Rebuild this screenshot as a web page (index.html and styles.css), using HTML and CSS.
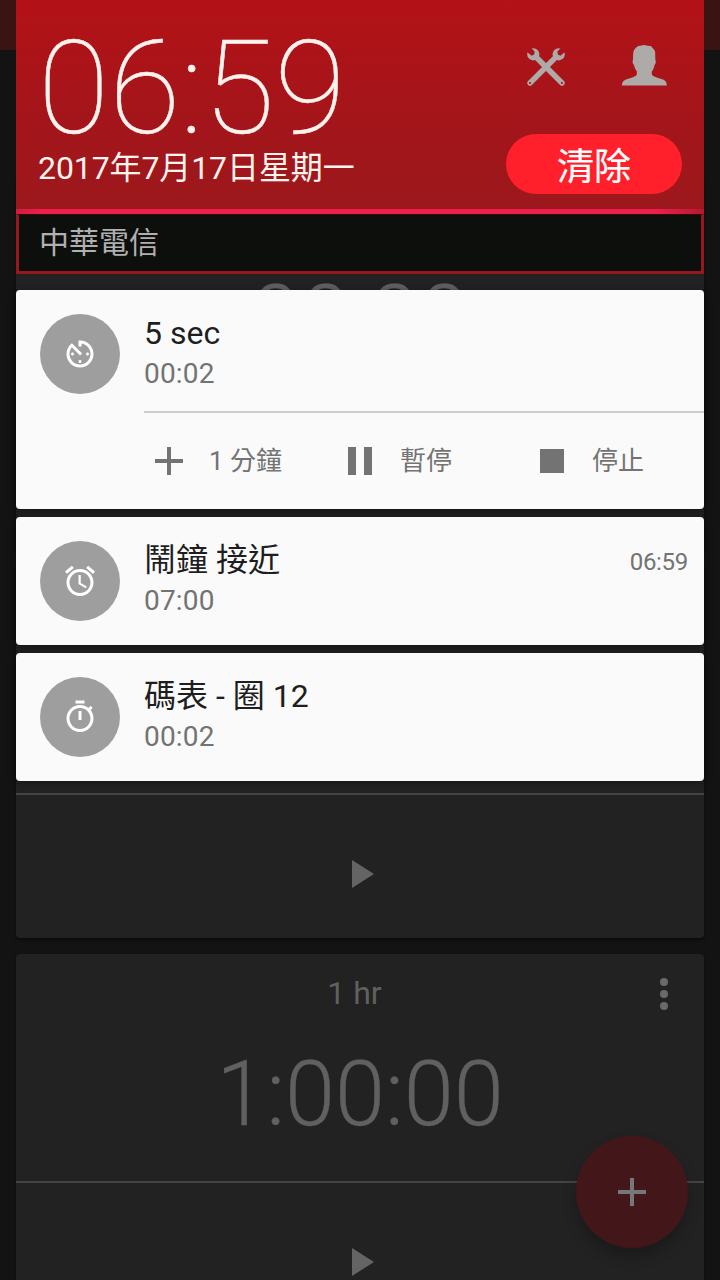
FILE: index.html
```html
<!DOCTYPE html>
<html lang="zh-Hant">
<head>
<meta charset="utf-8">
<title>時鐘</title>
<link rel="stylesheet" href="styles.css">
</head>
<body>
<div class="screen">
  <main class="app">
    <div class="app-bar"></div>
    <section class="timer timer-first">
      <div class="timer-name"></div>
      <div class="timer-value">00:00</div>
      <div class="timer-actions"></div>
    </section>
    <section class="timer">
      <div class="timer-name"></div>
      <div class="timer-value"></div>
      <div class="timer-actions">
        <svg class="play" viewBox="0 0 22 28"><path d="M0 0L22 14L0 28z"/></svg>
      </div>
    </section>
    <section class="timer">
      <div class="timer-name"><span>1 hr</span>
        <svg class="more" viewBox="0 0 8 32"><circle cx="4" cy="4" r="4"/><circle cx="4" cy="16" r="4"/><circle cx="4" cy="28" r="4"/></svg>
      </div>
      <div class="timer-value">1:00:00</div>
      <div class="timer-actions">
        <svg class="play" viewBox="0 0 22 28"><path d="M0 0L22 14L0 28z"/></svg>
      </div>
    </section>
    <div class="fab"><svg class="fab-plus" viewBox="0 0 28 28"><path d="M12 0h4v12h12v4H16v12h-4V16H0v-4h12z"/></svg></div>
  </main>

  <div class="shade">
    <header class="header">
      <div class="header-left">
        <div class="clock">06:59</div>
        <div class="date">2017年7月17日星期一</div>
      </div>
      <div class="header-right">
        <div class="header-icons">
          <svg class="tools" viewBox="0 0 38 38">
            <defs>
              <mask id="holes" maskUnits="userSpaceOnUse" x="-4" y="-4" width="46" height="46">
                <rect x="-4" y="-4" width="46" height="46" fill="#fff"/>
                <circle cx="35" cy="35" r="1.1" fill="#000"/>
                <path d="M-2 2.2L2.2 -2L7.6 3.6L7.2 6.6L4.6 7.8z" fill="#000"/>
              </mask>
              <g id="wrench" mask="url(#holes)">
                <path d="M6 6L35 35" stroke="#adaaa7" stroke-width="5.4" stroke-linecap="round"/>
                <circle cx="6.3" cy="6.3" r="6.1" fill="#adaaa7"/>
              </g>
            </defs>
            <use href="#wrench"/>
            <use href="#wrench" transform="matrix(-1 0 0 1 38 0)"/>
          </svg>
          <svg class="user" viewBox="0 0 45 41"><path d="M0 40.6C.2 37 1.2 35.6 4 34.5C8 33 13.5 32.2 14.8 29.5L14.9 26.4C13.4 24.8 12.6 22.6 12 20C10.6 19 10.2 16.4 11 14.5L11.2 8C12 3.4 15 .6 19.5 .4L22 0L27 1L29 .9L30.5 3C32.6 4.2 33.5 7 33.2 9.5L33.3 14.5C34.2 16.5 33.8 19 32.5 20C32 22.6 31.2 25 29.8 26.4L29.9 29.5C31.5 32.2 37 33 41 34.5C43.6 35.6 44.6 37 44.8 40.6z"/></svg>
        </div>
        <div class="clear">清除</div>
      </div>
    </header>
    <div class="glow"></div>
    <div class="carrier">中華電信</div>

    <div class="notes">
      <article class="note">
        <div class="note-top">
          <div class="badge"><svg viewBox="0 0 24 24"><path d="M11 17c0 .55.45 1 1 1s1-.45 1-1-.45-1-1-1-1 .45-1 1zm0-14v4h2V5.08c3.39.49 6 3.39 6 6.92 0 3.87-3.13 7-7 7s-7-3.13-7-7c0-1.68.59-3.22 1.58-4.42L12 13l1.41-1.41-6.8-6.8v.02C4.42 6.45 3 9.05 3 12c0 4.97 4.02 9 9 9 4.97 0 9-4.03 9-9s-4.03-9-9-9h-1zm7 9c0-.55-.45-1-1-1s-1 .45-1 1 .45 1 1 1 1-.45 1-1zM6 12c0 .55.45 1 1 1s1-.45 1-1-.45-1-1-1-1 .45-1 1z"/></svg></div>
          <div class="note-text"><div class="note-title">5 sec</div><div class="note-sub">00:02</div></div>
        </div>
        <div class="note-actions">
          <div class="action"><span class="action-icon action-icon-wide"><svg class="ico-plus" viewBox="0 0 28 28"><path d="M12 0h4v12h12v4H16v12h-4V16H0v-4h12z"/></svg></span>1 分鐘</div>
          <div class="action"><span class="action-icon"><svg class="ico-pause" viewBox="0 0 24 28"><path d="M0 0h8v28H0zM16 0h8v28h-8z"/></svg></span>暫停</div>
          <div class="action"><span class="action-icon"><svg class="ico-stop" viewBox="0 0 24 24"><path d="M0 0h24v24H0z"/></svg></span>停止</div>
        </div>
      </article>
      <article class="note">
        <div class="note-top">
          <div class="badge"><svg viewBox="0 0 24 24"><path d="M22 5.72l-4.6-3.86-1.29 1.53 4.6 3.86L22 5.72zM7.88 3.39L6.6 1.86 2 5.71l1.29 1.53 4.59-3.85zM12.5 8H11v6l4.75 2.85.75-1.23-4-2.37V8zM12 4c-4.97 0-9 4.03-9 9s4.02 9 9 9c4.97 0 9-4.03 9-9s-4.03-9-9-9zm0 16c-3.87 0-7-3.13-7-7s3.13-7 7-7 7 3.13 7 7-3.13 7-7 7z"/></svg></div>
          <div class="note-text"><div class="note-title">鬧鐘 接近</div><div class="note-sub">07:00</div></div>
          <div class="note-time">06:59</div>
        </div>
      </article>
      <article class="note">
        <div class="note-top">
          <div class="badge"><svg viewBox="0 0 24 24"><path d="M15 1H9v2h6V1zm-4 13h2V8h-2v6zm8.03-6.61l1.42-1.42c-.43-.51-.9-.99-1.41-1.41l-1.42 1.42C16.07 4.74 14.12 4 12 4c-4.97 0-9 4.03-9 9s4.02 9 9 9 9-4.03 9-9c0-2.12-.74-4.07-1.97-5.61zM12 20c-3.87 0-7-3.13-7-7s3.13-7 7-7 7 3.13 7 7-3.13 7-7 7z"/></svg></div>
          <div class="note-text"><div class="note-title">碼表 - 圈 12</div><div class="note-sub">00:02</div></div>
        </div>
      </article>
    </div>
  </div>
</div>
</body>
</html>
```
FILE: styles.css
```css
* { box-sizing: border-box; }

body {
  margin: 0;
  background: #131313;
  font-family: Roboto, "Noto Sans CJK TC", sans-serif;
}

svg { display: block; overflow: visible; }

.screen {
  position: relative;
  width: 720px;
  height: 1280px;
  overflow: hidden;
}

/* Dimmed clock app */
.app {
  display: flex;
  flex-direction: column;
  gap: 16px;
  height: 1280px;
  overflow: hidden;
}

.app-bar { height: 50px; background: #3a1313; flex: none; }

.timer {
  flex: none;
  height: 372px;
  margin: 0 16px;
  border-radius: 4px;
  background: #222;
  box-shadow: 0 2px 3px rgba(0, 0, 0, .4);
  color: #606060;
}

.timer-first { margin-top: 112px; }

.timer-name {
  display: flex;
  justify-content: center;
  height: 80px;
  padding-right: 11px;
  font-size: 32px;
  line-height: 78px;
  position: relative;
}

.more {
  position: absolute;
  right: 36px;
  top: 24px;
  width: 8px;
  height: 32px;
  fill: #6a6a6a;
}

.timer-value {
  height: 147px;
  font-size: 90px;
  font-weight: 300;
  line-height: 122px;
  text-align: center;
  -webkit-text-stroke: .3px;
}

.timer-actions {
  display: flex;
  justify-content: center;
  height: 145px;
  padding: 65px 0 0 6px;
  border-top: 2px solid #444;
}

.play { width: 22px; height: 28px; fill: #646464; }

.fab {
  position: absolute;
  right: 32px;
  bottom: 32px;
  display: flex;
  align-items: center;
  justify-content: center;
  width: 112px;
  height: 112px;
  border-radius: 50%;
  background: #431719;
  box-shadow: 0 8px 14px rgba(0, 0, 0, .25);
}

.fab-plus { width: 28px; height: 28px; fill: #777; }

/* Notification shade over the app */
.shade {
  position: absolute;
  top: 0;
  left: 16px;
  width: 688px;
}

.header {
  display: flex;
  justify-content: space-between;
  height: 209px;
  padding: 24px 22px 0;
  background: linear-gradient(#b31217, #a4151a 55%, #9c181c);
}

.clock {
  height: 128px;
  font-size: 130px;
  font-weight: 100;
  line-height: 129px;
  color: #fff3ee;
  -webkit-text-stroke: .5px;
}

.date {
  font-size: 32px;
  line-height: 32px;
  letter-spacing: -.1px;
  color: #fff3ee;
  white-space: nowrap;
}

.header-right { width: 176px; padding-top: 21px; }

.header-icons {
  display: flex;
  justify-content: space-between;
  height: 89px;
  padding: 0 15px 0 21px;
}

.tools { width: 38px; height: 38px; margin-top: 3px; }
.user { width: 45px; height: 41px; fill: #adaaa7; }

.clear {
  height: 60px;
  border-radius: 30px;
  background: #ff202b;
  color: #fff;
  font-size: 37px;
  line-height: 67px;
  text-align: center;
  -webkit-text-stroke: .2px;
}

.glow {
  height: 5px;
  background: linear-gradient(90deg, #d01c40, #ee1f4d 4%, #ee1f4d 93%, #b41a2e);
}

.carrier {
  height: 60px;
  padding-left: 20px;
  border: 3px solid #96191e;
  border-top: 1px solid #3a080c;
  background: #0d0f0d;
  color: #b0b0b0;
  font-size: 30px;
  line-height: 56px;
}

.notes {
  display: flex;
  flex-direction: column;
  gap: 8px;
  padding-top: 16px;
}

.note {
  border-radius: 4px;
  background: #fafafa;
  box-shadow: 0 2px 8px rgba(0, 0, 0, .4);
  color: #737373;
}

.note-top {
  display: flex;
  height: 128px;
  padding: 24px 16px 0 24px;
}

.badge {
  display: flex;
  align-items: center;
  justify-content: center;
  flex: none;
  width: 80px;
  height: 80px;
  border-radius: 50%;
  background: #9e9e9e;
}

.badge svg { width: 36px; height: 36px; fill: #fff; }

.note-text { flex: 1; padding-left: 24px; }

.note-title { color: #1e1e1e; font-size: 32px; line-height: 38px; }

.note-sub { font-size: 28px; line-height: 43px; letter-spacing: .2px; }

.note-time { font-size: 24px; line-height: 42px; letter-spacing: -.3px; }

.note-actions {
  display: grid;
  grid-template-columns: repeat(3, 192px);
  height: 98px;
  margin: -7px 0 0 128px;
  border-top: 2px solid #ccc;
  overflow: hidden;
}

.action {
  display: flex;
  font-size: 26px;
  line-height: 96px;
  white-space: pre;
}

.action-icon {
  display: flex;
  align-items: center;
  justify-content: center;
  width: 48px;
  height: 96px;
  margin-right: 16px;
}

.action-icon-wide { margin-right: 17px; }

.ico-plus { width: 28px; height: 28px; fill: #737373; margin-left: 2px; }
.ico-pause { width: 24px; height: 28px; fill: #737373; }
.ico-stop { width: 24px; height: 24px; fill: #737373; }
```
